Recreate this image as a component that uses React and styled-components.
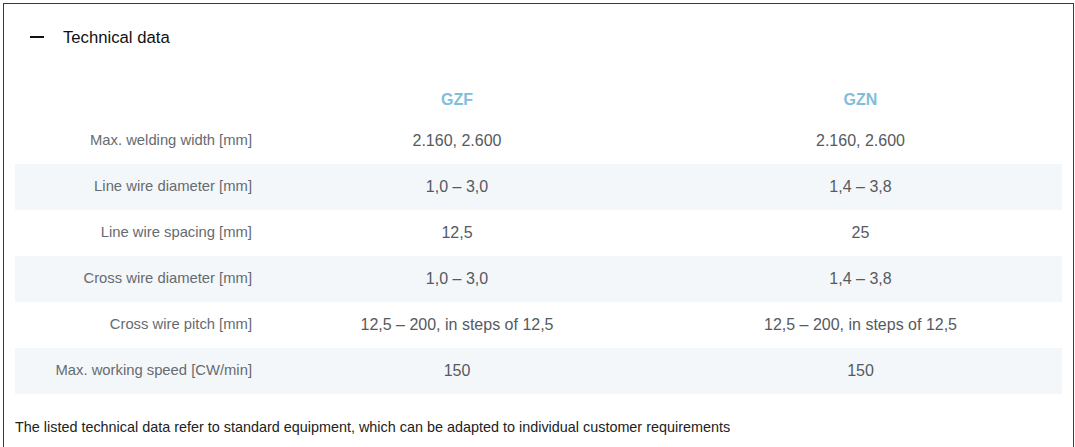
import React from "react";
import styled, { createGlobalStyle } from "styled-components";

const Global = createGlobalStyle`
  html, body { margin: 0; padding: 0; background: #fff; }
  body { font-family: "Liberation Sans", Arial, sans-serif; }
`;

const Frame = styled.section`
  margin: 3px 1px 0 3px;
  border: 1px solid #7a1e28;
  border-bottom: none;
  padding: 11px 11px 20px 11px;
  min-height: 460px;
  box-sizing: border-box;
`;

const Header = styled.div`
  display: flex;
  align-items: center;
  height: 44px;
  padding-left: 15px;
  gap: 19px;
`;

const Minus = styled.span`
  display: block;
  width: 14px;
  height: 2px;
  background: #111;
`;

const Title = styled.h3`
  margin: 0;
  padding-top: 2px;
  font-weight: 400;
  font-size: 16.7px;
  color: #111;
`;

const Table = styled.div`
  margin-top: 19px;
  display: grid;
  grid-template-columns: 240px 404px 1fr;
`;

const Row = styled.div`
  display: contents;
`;

const Cell = styled.div`
  height: ${(p) => (p.$head ? "40px" : "46px")};
  display: flex;
  align-items: ${(p) => (p.$head ? "flex-end" : "center")};
  justify-content: ${(p) => (p.$label ? "flex-end" : "center")};
  padding: ${(p) => (p.$label ? "0 3px 0 0" : p.$head ? "0 0 9px 0" : "0")};
  box-sizing: border-box;
  background: ${(p) => (p.$shade ? "#f4f7fa" : "transparent")};
  font-size: ${(p) => (p.$label ? "14.8px" : "16px")};
  line-height: 18px;
  color: ${(p) => (p.$label ? "#666b70" : "#555a60")};
  white-space: nowrap;
`;

const HeadText = styled.span`
  font-weight: 700;
  color: #80bedb;
  font-size: 16px;
`;

const LabelText = styled.span`
  position: relative;
  top: -1px;
`;

const Note = styled.p`
  margin: 24px 0 0 0;
  font-size: 14.4px;
  line-height: 18px;
  color: #222;
`;

const rows = [
  ["Max. welding width [mm]", "2.160, 2.600", "2.160, 2.600"],
  ["Line wire diameter [mm]", "1,0 – 3,0", "1,4 – 3,8"],
  ["Line wire spacing [mm]", "12,5", "25"],
  ["Cross wire diameter [mm]", "1,0 – 3,0", "1,4 – 3,8"],
  ["Cross wire pitch [mm]", "12,5 – 200, in steps of 12,5", "12,5 – 200, in steps of 12,5"],
  ["Max. working speed [CW/min]", "150", "150"],
];

export default function App() {
  return (
    <>
      <Global />
      <Frame>
        <Header>
          <Minus />
          <Title>Technical data</Title>
        </Header>
        <Table>
          <Row>
            <Cell $head $label />
            <Cell $head><HeadText>GZF</HeadText></Cell>
            <Cell $head><HeadText>GZN</HeadText></Cell>
          </Row>
          {rows.map((r, i) => {
            const shade = i % 2 === 1;
            return (
              <Row key={i}>
                <Cell $label $shade={shade}><LabelText>{r[0]}</LabelText></Cell>
                <Cell $shade={shade}>{r[1]}</Cell>
                <Cell $shade={shade}>{r[2]}</Cell>
              </Row>
            );
          })}
        </Table>
        <Note>
          The listed technical data refer to standard equipment, which can be adapted to individual customer requirements
        </Note>
      </Frame>
    </>
  );
}
